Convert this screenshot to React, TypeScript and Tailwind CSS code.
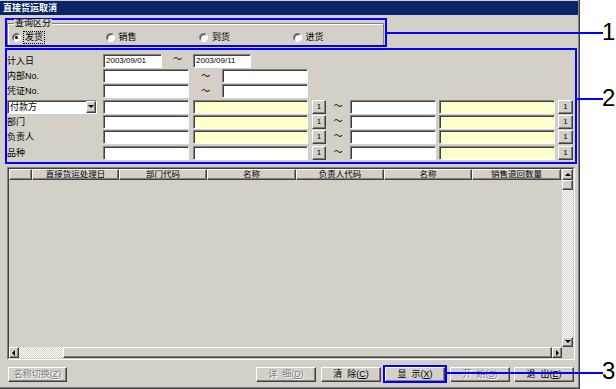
import React from "react";

const sunk =
	"border border-t-[#808080] border-l-[#808080] border-r-white border-b-white shadow-[inset_1px_1px_0_#404040]";
const raised =
	"border border-t-white border-l-white border-r-[#404040] border-b-[#404040] shadow-[inset_-1px_-1px_0_#808080]";
const dither =
	"bg-[repeating-conic-gradient(#ffffff_0_25%,#d4d0c8_0_50%)] bg-[length:2px_2px]";

const Input = ({
	className,
	value,
	yellow,
}: {
	className: string;
	value?: string;
	yellow?: boolean;
}) => (
	<div
		className={`h-full shrink-0 ${sunk} ${yellow ? "bg-[#ffffcc]" : "bg-white"} ${className} flex items-center pl-[2px] text-[8px] leading-none`}
	>
		{value}
	</div>
);

const OneBtn = ({ className }: { className: string }) => (
	<div
		className={`h-full shrink-0 ${raised} bg-[#d4d0c8] ${className} flex items-center justify-center text-[8px] leading-none`}
	>
		1
	</div>
);

const Tilde = ({ className }: { className: string }) => (
	<div
		className={`h-full shrink-0 ${className} flex items-start justify-center text-[9px] leading-[9px] font-['Noto_Sans_CJK_SC',sans-serif]`}
	>
		～
	</div>
);

const Label = ({ text }: { text: string }) => (
	<div className="w-[96px] shrink-0 flex items-center text-[9px] leading-none">
		{text}
	</div>
);

const Arrow = ({ dir }: { dir: "up" | "down" | "left" | "right" }) => {
	const pts = {
		up: "1,5 4,2 7,5",
		down: "1,2 4,5 7,2",
		left: "5,1 2,4 5,7",
		right: "3,1 6,4 3,7",
	}[dir];
	return (
		<svg width="8" height="8" viewBox="0 0 8 8">
			<polygon points={pts} fill="#000" />
		</svg>
	);
};

const Radio = ({ label, checked }: { label: string; checked?: boolean }) => (
	<div className="w-[93.5px] shrink-0 flex items-center gap-[2px]">
		<span
			className={`w-[9px] h-[9px] rounded-full bg-white ${sunk} flex items-center justify-center`}
		>
			{checked && <span className="w-[3px] h-[3px] rounded-full bg-black" />}
		</span>
		<span
			className={`px-px text-[9px] leading-[11px] ${checked ? "border border-dotted border-black" : "border border-transparent"}`}
		>
			{label}
		</span>
	</div>
);

const Btn = ({
	label,
	keyChar,
	className,
	disabled,
}: {
	label: string;
	keyChar: string;
	className: string;
	disabled?: boolean;
}) => (
	<div
		className={`h-[15px] shrink-0 ${raised} bg-[#d4d0c8] ${className} flex items-center justify-center whitespace-pre text-[9px] leading-none ${disabled ? "text-[#808080] [text-shadow:1px_1px_0_#fff]" : "text-black"}`}
	>
		{label}(<span className="underline">{keyChar}</span>)
	</div>
);

const columns = [
	{ w: "w-[23px]", t: "" },
	{ w: "w-[87px]", t: "直接货运处理日" },
	{ w: "w-[88px]", t: "部门代码" },
	{ w: "w-[89px]", t: "名称" },
	{ w: "w-[88px]", t: "负责人代码" },
	{ w: "w-[88px]", t: "名称" },
	{ w: "w-[89px]", t: "销售退回数量" },
];

const lookupRows = [
	{ label: "部门", yellowA: true },
	{ label: "负责人", yellowA: true },
	{ label: "品种", yellowA: false },
];

export default function App() {
	return (
		<div className="relative w-[616px] h-[389px] overflow-hidden bg-white text-black font-['Liberation_Sans','Noto_Sans_CJK_SC',sans-serif]">
			{/* dialog window */}
			<div className="w-[580px] h-[389px] bg-[#d4d0c8] border-r border-b border-[#404040] shadow-[inset_-1px_-1px_0_#808080] flex flex-col pt-px">
				<div className="h-[14px] mr-[1px] bg-[#0a246a] text-white font-bold text-[9px] leading-none flex items-center pl-[3px]">
					直接货运取消
				</div>

				{/* query type */}
				<div className="mt-[3px] ml-[5px] w-[382px] h-[29px] border-2 border-[#0000ff] flex flex-col">
					<div className="relative mt-[3px] mr-px flex-1 border-t border-l border-r border-[#808080] shadow-[inset_1px_1px_0_#fff] flex items-start pt-[7px] pl-[4px]">
						<span className="absolute -top-[5px] left-[6px] bg-[#d4d0c8] px-px text-[9px] leading-[9px]">
							查询区分
						</span>
						<Radio label="发货" checked />
						<Radio label="销售" />
						<Radio label="到货" />
						<Radio label="进货" />
					</div>
				</div>

				{/* conditions */}
				<div className="mt-px ml-[5px] w-[572px] h-[116px] border-2 border-[#0000ff] flex flex-col gap-px pt-[4px]">
					<div className="flex h-[14px]">
						<Label text="计入日" />
						<Input className="w-[59px]" value="2003/09/01" />
						<Tilde className="w-[31px]" />
						<Input className="w-[58px]" value="2003/09/11" />
					</div>
					<div className="flex h-[14px]">
						<Label text="内部No." />
						<Input className="w-[86px]" />
						<Tilde className="w-[33px] pt-[2px]" />
						<Input className="w-[86px]" />
					</div>
					<div className="flex h-[14px]">
						<Label text="凭证No." />
						<Input className="w-[86px]" />
						<Tilde className="w-[33px] pt-[2px]" />
						<Input className="w-[86px]" />
					</div>
					<div className="mt-px flex h-[14px]">
						<div className="w-[96px] shrink-0 pr-[6px]">
							<div
								className={`h-full bg-white ${sunk} flex items-center justify-between pl-[2px] text-[9px] leading-none`}
							>
								付款方
								<span
									className={`w-[10px] h-full ${raised} bg-[#d4d0c8] flex items-center justify-center`}
								>
									<Arrow dir="down" />
								</span>
							</div>
						</div>
						<Input className="w-[86px]" />
						<Input className="ml-[4px] w-[115px]" yellow />
						<OneBtn className="ml-[4px] w-[14px]" />
						<Tilde className="w-[24px] pt-px" />
						<Input className="w-[86px]" />
						<Input className="ml-[3px] w-[116px]" yellow />
						<OneBtn className="ml-[3px] w-[15px]" />
					</div>
					{lookupRows.map((r, i) => (
						<div
							key={r.label}
							className={`flex h-[14px] ${i === 2 ? "mt-px" : ""}`}
						>
							<Label text={r.label} />
							<Input className="w-[86px]" />
							<Input className="ml-[4px] w-[115px]" yellow={r.yellowA} />
							<OneBtn className="ml-[4px] w-[14px]" />
							<Tilde className="w-[24px] pt-px" />
							<Input className="w-[86px]" />
							<Input className="ml-[3px] w-[116px]" yellow />
							<OneBtn className="ml-[3px] w-[15px]" />
						</div>
					))}
				</div>

				{/* result list */}
				<div className="mt-[3px] ml-[7px] w-[568px] h-[193px] border border-t-[#808080] border-l-[#808080] border-r-white border-b-white">
					<div className="w-full h-full border border-t-[#404040] border-l-[#404040] border-r-[#d4d0c8] border-b-[#d4d0c8] flex flex-col">
						<div className="flex flex-1 min-h-0">
							<div className="flex-1 flex flex-col">
								<div className="flex h-[11px]">
									{columns.map((c, i) => (
										<div
											key={i}
											className={`${c.w} shrink-0 ${raised} bg-[#d4d0c8] flex items-center justify-center text-[8.5px] leading-none`}
										>
											{c.t}
										</div>
									))}
								</div>
								<div className="flex-1" />
							</div>
							<div className="w-[11px] flex flex-col">
								<div
									className={`h-[11px] ${raised} bg-[#d4d0c8] flex items-center justify-center`}
								>
									<Arrow dir="up" />
								</div>
								<div className={`h-[10px] ${raised} bg-[#d4d0c8]`} />
								<div className={`flex-1 ${dither}`} />
								<div
									className={`h-[10px] ${raised} bg-[#d4d0c8] flex items-center justify-center`}
								>
									<Arrow dir="down" />
								</div>
							</div>
						</div>
						<div className="flex h-[11px]">
							<div
								className={`w-[10px] ${raised} bg-[#d4d0c8] flex items-center justify-center`}
							>
								<Arrow dir="left" />
							</div>
							<div className={`w-[44px] ${dither}`} />
							<div className={`flex-1 ${raised} bg-[#d4d0c8]`} />
							<div
								className={`w-[10px] ${raised} bg-[#d4d0c8] flex items-center justify-center`}
							>
								<Arrow dir="right" />
							</div>
							<div className="w-[11px] bg-[#d4d0c8]" />
						</div>
					</div>
				</div>

				{/* buttons */}
				<div className="mt-[7px] flex items-center">
					<Btn className="ml-[8px] w-[59px]" label="名称切换" keyChar="Z" disabled />
					<Btn className="ml-[189px] w-[60px]" label="详  细" keyChar="D" disabled />
					<Btn className="ml-[5px] w-[60px]" label="清  除" keyChar="C" />
					<div className="relative ml-[4px]">
						<Btn className="w-[60px]" label="显  示" keyChar="X" />
						<div className="absolute -left-[2px] -right-[2px] -top-[2px] -bottom-[1px] border-2 border-[#0000ff]" />
					</div>
					<Btn className="ml-[5px] w-[60px]" label="开  始" keyChar="S" disabled />
					<Btn className="ml-[4px] w-[60px]" label="退  出" keyChar="E" />
				</div>
			</div>

			{/* callouts */}
			<div className="absolute left-[387px] top-[32px] w-[216px] h-[2px] bg-[#0000ff]" />
			<div className="absolute left-[602px] top-[20px] text-[24px] leading-[24px]">1</div>
			<div className="absolute left-[577px] top-[98px] w-[26px] h-[2px] bg-[#0000ff]" />
			<div className="absolute left-[602px] top-[86px] text-[24px] leading-[24px]">2</div>
			<div className="absolute left-[447px] top-[372px] w-[156px] h-[2px] bg-[#0000ff]" />
			<div className="absolute left-[602px] top-[359px] text-[24px] leading-[24px]">3</div>
		</div>
	);
}
